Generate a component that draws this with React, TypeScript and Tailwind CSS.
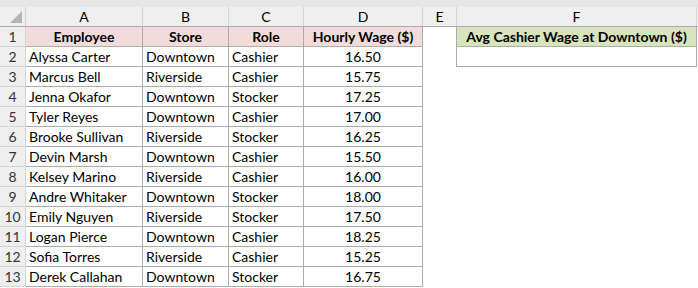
import React from "react";

type Row = [string, string, string, string];

const rows: Row[] = [
  ["Alyssa Carter", "Downtown", "Cashier", "16.50"],
  ["Marcus Bell", "Riverside", "Cashier", "15.75"],
  ["Jenna Okafor", "Downtown", "Stocker", "17.25"],
  ["Tyler Reyes", "Downtown", "Cashier", "17.00"],
  ["Brooke Sullivan", "Riverside", "Stocker", "16.25"],
  ["Devin Marsh", "Downtown", "Cashier", "15.50"],
  ["Kelsey Marino", "Riverside", "Cashier", "16.00"],
  ["Andre Whitaker", "Downtown", "Stocker", "18.00"],
  ["Emily Nguyen", "Riverside", "Stocker", "17.50"],
  ["Logan Pierce", "Downtown", "Cashier", "18.25"],
  ["Sofia Torres", "Riverside", "Cashier", "15.25"],
  ["Derek Callahan", "Downtown", "Stocker", "16.75"],
];

// column widths incl. right border
const W = { rh: "w-[26px]", a: "w-[117px]", b: "w-[86px]", c: "w-[75px]", d: "w-[119px]", e: "w-[34px]", f: "w-[240px]" };

const RowHead = ({ n }: { n: number }) => (
  <div className={`${W.rh} h-full shrink-0 flex items-center justify-center pt-[1px] bg-[#efefef] border-r border-b border-[#d4d4d4] text-[#333]`}>
    {n}
  </div>
);

const Cell = ({ w, children, className = "" }: { w: string; children?: React.ReactNode; className?: string }) => (
  <div className={`${w} h-full shrink-0 flex items-center border-r border-b border-[#ababab] px-[3px] pt-[1px] whitespace-nowrap ${className}`}>
    {children}
  </div>
);

export default function App() {
  return (
    <div className="w-[698px] h-[288px] bg-white overflow-hidden text-[14px] text-black leading-none" style={{ fontFamily: "Lato, 'Liberation Sans', sans-serif" }}>
      <div className="h-[7px] bg-[#e6e6e6]" />
      {/* column headers */}
      <div className="flex h-[20px] bg-[#efefef] border-b border-[#ababab]">
        <div className={`${W.rh} shrink-0 relative border-r border-[#d4d4d4]`}>
          <div className="absolute right-[3px] bottom-[3px] w-0 h-0 border-l-[12px] border-l-transparent border-b-[12px] border-b-[#b4b4b4]" />
        </div>
        {(["A", "B", "C", "D", "E", "F"] as const).map((l, i) => (
          <div key={l} className={`${[W.a, W.b, W.c, W.d, W.e, W.f][i]} shrink-0 flex items-center justify-center border-r border-[#d4d4d4]`}>
            {l}
          </div>
        ))}
        <div className="flex-1" />
      </div>
      {/* row 1 */}
      <div className="flex h-[20px]">
        <RowHead n={1} />
        {["Employee", "Store", "Role", "Hourly Wage ($)"].map((t, i) => (
          <Cell key={t} w={[W.a, W.b, W.c, W.d][i]} className="justify-center font-bold bg-[#f2dcdb]">
            {t}
          </Cell>
        ))}
        <div className={`${W.e} shrink-0 border-r border-[#ababab]`} />
        <Cell w={W.f} className="justify-center font-bold bg-[#d8e4bc]">
          Avg Cashier Wage at Downtown ($)
        </Cell>
      </div>
      {rows.map((r, i) => (
        <div key={i} className="flex h-[20px]">
          <RowHead n={i + 2} />
          <Cell w={W.a}>{r[0]}</Cell>
          <Cell w={W.b}>{r[1]}</Cell>
          <Cell w={W.c}>{r[2]}</Cell>
          <Cell w={W.d} className="justify-center">{r[3]}</Cell>
          <div className={`${W.e} shrink-0 ${i === 0 ? "border-r border-[#ababab]" : ""}`} />
          {i === 0 && <Cell w={W.f} />}
        </div>
      ))}
    </div>
  );
}
